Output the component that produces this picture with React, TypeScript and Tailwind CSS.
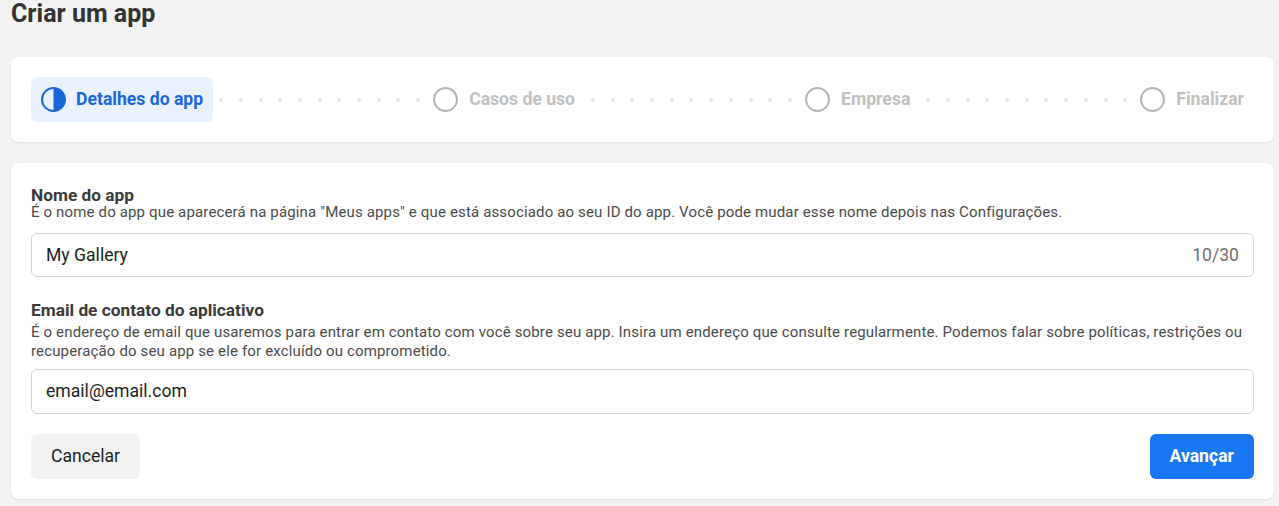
import React from "react";

function Dots() {
  return (
    <div className="flex-1 flex items-center justify-between pl-[6px] pr-[3px] overflow-hidden">
      {Array.from({ length: 11 }).map((_, i) => (
        <span key={i} className="w-[4px] h-[4px] rounded-full bg-[#e4e4e4] shrink-0" />
      ))}
    </div>
  );
}

function Step({ label }: { label: string }) {
  return (
    <div className="flex items-center h-[45px] px-[10px] gap-[11px] shrink-0">
      <span className="w-[25px] h-[25px] rounded-full border-2 border-[#b4b4b4] box-border" />
      <span className="text-[17.6px] font-bold text-[#c0c0c0]">{label}</span>
    </div>
  );
}

export default function App() {
  return (
    <div
      className="min-h-[506px] bg-[#f2f2f2] pl-[11px] pr-[5px]"
      style={{ fontFamily: "Roboto, 'Noto Sans', Arial, sans-serif" }}
    >
      <h1 className="text-[25px] leading-[28px] font-bold text-[#333333]">Criar um app</h1>

      <div className="mt-[29px] bg-white rounded-[8px] shadow-[0_1px_2px_rgba(0,0,0,0.08)] p-[20px] flex items-center">
        <div className="flex items-center h-[45px] px-[10px] gap-[10px] rounded-[6px] bg-[#e8f1fd] shrink-0">
          <svg width="25" height="25" viewBox="0 0 25 25">
            <circle cx="12.5" cy="12.5" r="11.5" fill="none" stroke="#1b66d6" strokeWidth="2" />
            <path d="M12.5 1 A11.5 11.5 0 0 1 12.5 24 Z" fill="#1b66d6" />
          </svg>
          <span className="text-[17.6px] font-bold text-[#1b66d6]">Detalhes do app</span>
        </div>
        <Dots />
        <Step label="Casos de uso" />
        <Dots />
        <Step label="Empresa" />
        <Dots />
        <Step label="Finalizar" />
      </div>

      <div className="mt-[21px] bg-white rounded-[8px] shadow-[0_1px_2px_rgba(0,0,0,0.08)] px-[20px] pt-[23px] pb-[20px]">
        <div className="text-[17.3px] leading-[18px] font-bold text-[#3a3a3a]">Nome do app</div>
        <div className="text-[15px] tracking-[0.15px] leading-[16px] text-[#4b4b4b]">
          É o nome do app que aparecerá na página "Meus apps" e que está associado ao seu ID do app. Você pode mudar esse nome depois nas Configurações.
        </div>
        <div className="mt-[13px] h-[44px] border border-[#d4d4d4] rounded-[6px] flex items-center justify-between px-[14px]">
          <span className="text-[17.6px] text-[#1c1e21]">My Gallery</span>
          <span className="text-[17.6px] text-[#707070]">10/30</span>
        </div>

        <div className="mt-[24px] text-[17.3px] leading-[18px] font-bold text-[#3a3a3a]">Email de contato do aplicativo</div>
        <div className="mt-[3.5px] text-[15px] tracking-[0.15px] leading-[19.6px] text-[#4b4b4b]">
          É o endereço de email que usaremos para entrar em contato com você sobre seu app. Insira um endereço que consulte regularmente. Podemos falar sobre políticas, restrições ou recuperação do seu app se ele for excluído ou comprometido.
        </div>
        <div className="mt-[7px] h-[45px] border border-[#d4d4d4] rounded-[6px] flex items-center px-[14px]">
          <span className="text-[17.6px] text-[#1c1e21]">email@email.com</span>
        </div>

        <div className="mt-[20px] flex items-center justify-between">
          <button className="h-[45px] px-[20px] rounded-[6px] bg-[#f2f2f2] text-[17.6px] text-[#1c1e21]">Cancelar</button>
          <button className="h-[45px] px-[20px] rounded-[6px] bg-[#1877f2] text-[17.6px] font-bold text-white">Avançar</button>
        </div>
      </div>
    </div>
  );
}
